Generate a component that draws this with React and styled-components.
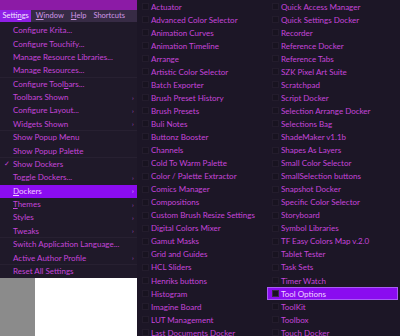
import React from 'react';
import styled, { createGlobalStyle } from 'styled-components';

const Global = createGlobalStyle`
  html, body { margin: 0; padding: 0; background: #1d1727; }
  body {
    width: 400px; height: 336px; overflow: hidden;
    font-family: Lato, "Open Sans", sans-serif;
    -webkit-font-smoothing: antialiased;
  }
`;

const Screen = styled.div`
  display: flex;
  width: 400px;
  height: 336px;
  overflow: hidden;
`;

const LeftPane = styled.div`
  width: 137px;
  flex: none;
  display: flex;
  flex-direction: column;
`;

const TitleBand = styled.div`
  height: 10px;
  background: #8c1ba6;
`;

const MenuBar = styled.div`
  height: 12px;
  background: #372b45;
  display: flex;
  align-items: stretch;
  gap: 2px;
`;

const MenuBarItem = styled.div`
  padding: 0 2.5px;
  font-size: 7.5px;
  line-height: 12px;
  color: ${p => (p.$active ? '#f3e4ff' : '#cf97e6')};
  background: ${p => (p.$active ? '#8f1fe6' : 'transparent')};
  white-space: nowrap;
`;

const SettingsMenu = styled.div`
  height: 256px;
  box-sizing: border-box;
  padding-top: 2px;
  background: #1f1929;
  display: flex;
  flex-direction: column;
`;

const MenuItem = styled.div`
  height: 13.39px;
  flex: none;
  box-sizing: border-box;
  display: flex;
  align-items: center;
  font-size: 8px;
  color: ${p => (p.$active ? '#f1cdff' : '#c645db')};
  background: ${p => (p.$active ? '#8a0cf0' : 'transparent')};
  border-bottom: 1px solid ${p => (p.$sep ? '#272031' : 'transparent')};
  white-space: nowrap;
`;

const Gutter = styled.span`
  width: 13px;
  flex: none;
  text-align: center;
  font-size: 7px;
  color: #c645db;
`;

const Label = styled.span`
  flex: 1;
`;

const Arrow = styled.span`
  width: 5px;
  flex: none;
  font-size: 6px;
  color: ${p => (p.$active ? '#f1cdff' : '#b64ccc')};
`;

const Mn = styled.span`
  text-decoration: underline;
  text-underline-offset: 1px;
`;

const BottomArea = styled.div`
  flex: 1;
  display: flex;
`;

const GreyStrip = styled.div`
  width: 35px;
  background: #8b8b8b;
`;

const Canvas = styled.div`
  flex: 1;
  background: #ffffff;
`;

const SubMenu = styled.div`
  flex: 1;
  background: #1c1626;
  display: flex;
  align-items: flex-start;
`;

const Column = styled.div`
  width: ${p => p.$w}px;
  flex: none;
  display: flex;
  flex-direction: column;
`;

const DockRow = styled.div`
  height: 13.06px;
  flex: none;
  box-sizing: border-box;
  display: flex;
  align-items: center;
  padding-left: 5px;
  font-size: 8px;
  white-space: nowrap;
  color: ${p => (p.$active ? '#f3d6ff' : '#c645db')};
  background: ${p => (p.$active ? '#8a0cf0' : 'transparent')};
  outline: ${p => (p.$active ? '1px solid #a95cf5' : 'none')};
  outline-offset: -1px;
`;

const Check = styled.span`
  width: 7px;
  height: 7px;
  flex: none;
  box-sizing: border-box;
  margin-right: 2px;
  background: ${p => (p.$active ? '#1a1222' : '#181320')};
  border: 1px solid ${p => (p.$active ? '#3a2a48' : '#231c2c')};
`;

const settings = [
  { label: 'Configure Krita...' },
  { label: 'Configure Touchify...' },
  { label: 'Manage Resource Libraries...' },
  { label: 'Manage Resources...', sep: true },
  { label: <>Configure Tool<Mn>b</Mn>ars...</> },
  { label: 'Toolbars Shown', arrow: true },
  { label: 'Configure Layout...', arrow: true },
  { label: 'Widgets Shown', arrow: true, sep: true },
  { label: 'Show Popup Menu' },
  { label: 'Show Popup Palette', sep: true },
  { label: 'Show Dockers', check: true },
  { label: 'Toggle Dockers...', arrow: true },
  { label: <><Mn>D</Mn>ockers</>, arrow: true, active: true },
  { label: <><Mn>T</Mn>hemes</>, arrow: true },
  { label: 'Styles', arrow: true },
  { label: 'Tweaks', arrow: true, sep: true },
  { label: 'Switch Application Language...' },
  { label: 'Active Author Profile', arrow: true, sep: true },
  { label: 'Reset All Settings' },
];

const col1 = [
  'Actuator', 'Advanced Color Selector', 'Animation Curves', 'Animation Timeline',
  'Arrange', 'Artistic Color Selector', 'Batch Exporter', 'Brush Preset History',
  'Brush Presets', 'Buli Notes', 'Buttonz Booster', 'Channels', 'Cold To Warm Palette',
  'Color / Palette Extractor', 'Comics Manager', 'Compositions',
  'Custom Brush Resize Settings', 'Digital Colors Mixer', 'Gamut Masks',
  'Grid and Guides', 'HCL Sliders', 'Henriks buttons', 'Histogram', 'Imagine Board',
  'LUT Management', 'Last Documents Docker',
];

const col2 = [
  'Quick Access Manager', 'Quick Settings Docker', 'Recorder', 'Reference Docker',
  'Reference Tabs', 'SZK Pixel Art Suite', 'Scratchpad', 'Script Docker',
  'Selection Arrange Docker', 'Selections Bag', 'ShadeMaker v1.1b', 'Shapes As Layers',
  'Small Color Selector', 'SmallSelection buttons', 'Snapshot Docker',
  'Specific Color Selector', 'Storyboard', 'Symbol Libraries', 'TF Easy Colors Map v.2.0',
  'Tablet Tester', 'Task Sets', 'Timer Watch', 'Tool Options', 'ToolKit', 'Toolbox',
  'Touch Docker',
];

export default function App() {
  return (
    <>
      <Global />
      <Screen>
        <LeftPane>
          <TitleBand />
          <MenuBar>
            <MenuBarItem $active>Setti<Mn>n</Mn>gs</MenuBarItem>
            <MenuBarItem><Mn>W</Mn>indow</MenuBarItem>
            <MenuBarItem><Mn>H</Mn>elp</MenuBarItem>
            <MenuBarItem>Shortcuts</MenuBarItem>
          </MenuBar>
          <SettingsMenu>
            {settings.map((s, i) => (
              <MenuItem key={i} $active={s.active} $sep={s.sep}>
                <Gutter>{s.check ? '✓' : ''}</Gutter>
                <Label>{s.label}</Label>
                <Arrow $active={s.active}>{s.arrow ? '›' : ''}</Arrow>
              </MenuItem>
            ))}
          </SettingsMenu>
          <BottomArea>
            <GreyStrip />
            <Canvas />
          </BottomArea>
        </LeftPane>
        <SubMenu>
          <Column $w={130}>
            {col1.map(n => (
              <DockRow key={n}><Check />{n}</DockRow>
            ))}
          </Column>
          <Column $w={131}>
            {col2.map(n => {
              const active = n === 'Tool Options';
              return (
                <DockRow key={n} $active={active}><Check $active={active} />{n}</DockRow>
              );
            })}
          </Column>
        </SubMenu>
      </Screen>
    </>
  );
}
